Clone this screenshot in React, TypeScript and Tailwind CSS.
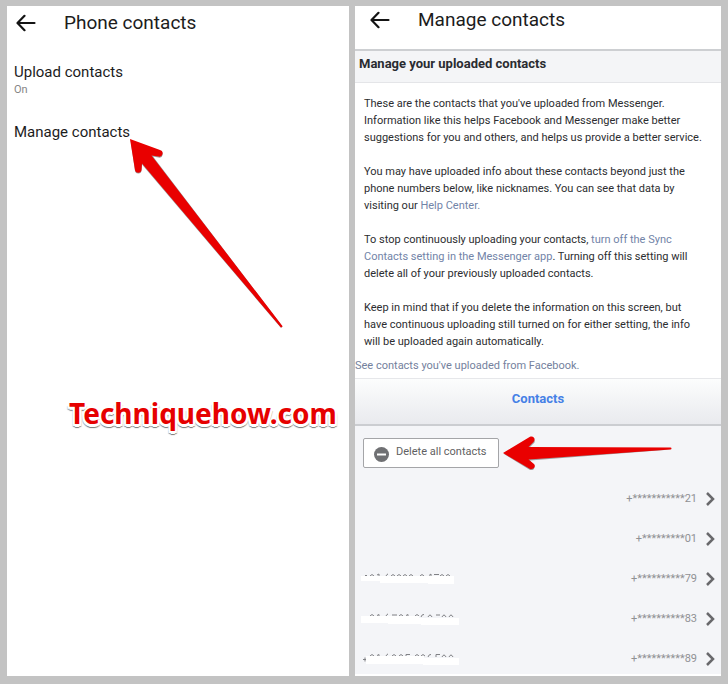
const contacts = [
    { number: "+***********21", masked: "" },
    { number: "+*********01", masked: "" },
    {
        number: "+**********79",
        masked: "M0 3h93v8h-26v-1h-48v-2h-19z",
        marks: "M4 2.500h2M9 3q2-3 4 0M16 2l2-1v2M25 3q1-2 2-2M30 3q2-3 4 0M36 3q2-3 4 0M42 3q2-3 4 0M48 3q2-3 4 0M59 3q2-3 4 0M68 2.500l2-1.500v2M73 1.500h5M79 3q2-3 4 0M85 3q2-3 4 0",
    },
    {
        number: "+**********83",
        masked: "M0 3h58v2h40v7h-38v-1h-33v-1h-27z",
        marks: "M9 3q2-3 4 0M16 2.500l2-1v2M25 3q1-2 2-2M31 2h5M38 3q2-3 4 0M45 2.500l2-1v2M54 3q2-3 4 0M60 4q1-3 3-2.500M67 4q2-4 4 0M75 2h4M81 4q2-4 4 0M88 4q2-4 4 0",
    },
    {
        number: "+**********89",
        masked: "M5 3h58v2h35v7h-36v-1h-57z",
        marks: "M2 6.500h4M4 4.500v4M9 3q2-3 4 0M16 2.500l2-1v2M25 3q1-2 2-2M31 3q2-3 4 0M38 3q2-3 4 0M45 3v-1.500h4M54 3q2-3 4 0M60 3q2-3 4 0M67 4q1-3 3-2.500M75 4v-2.500h4M81 4q2-4 4 0M88 4q2-4 4 0",
    },
];

function BackButton() {
    return (
        <button type="button" aria-label="Back" className="flex h-6 w-6 items-center justify-center">
            <svg width="20" height="18" viewBox="0 0 20 18" fill="none" stroke="#141414" strokeWidth="2.200">
                <path d="M18.500 9H2M8.500 1.800L1.500 9l7 7.200" strokeLinecap="round" strokeLinejoin="round" />
            </svg>
        </button>
    );
}

function PhoneContacts() {
    return (
        <section className="relative bg-white">
            <header className="flex items-center gap-[26px] px-[7px] pt-[5px]">
                <BackButton />
                <h1 className="text-[19px] leading-6 text-[#1c1c1c]">Phone contacts</h1>
            </header>
            <div className="px-[7px] pt-[27px]">
                <h2 className="text-[15px] leading-5">Upload contacts</h2>
                <p className="text-[11px] leading-4 text-[#858585]">On</p>
                <h2 className="mt-6 text-[15px] leading-5">Manage contacts</h2>
            </div>
            <svg
                className="absolute left-[122px] top-[132px]"
                width="156"
                height="192"
                viewBox="0 0 156 192"
                aria-hidden="true"
            >
                <path
                    d="M1.500 2L31 12.800A3.300 3.300 0 0 1 29.500 19.500L24 18.500L153.500 188.500L152 190L13 26.500L12.500 32.500A3.300 3.300 0 0 1 6 33Z"
                    fill="#555"
                    opacity=".6"
                />
                <path
                    d="M1 1L31 12A3.300 3.300 0 0 1 29.500 18.500L22.500 17.500L153 187.500A1 1 0 0 1 151.500 189L13 25.500L12.500 32A3.300 3.300 0 0 1 6 32Z"
                    fill="#e90000"
                />
            </svg>
            <p className="mt-[253px] pl-[62px] font-['Noto_Sans'] text-[28px] font-bold leading-9 text-[#e60000] [text-shadow:-2px_0_#fff,2px_0_#fff,0_-2px_#fff,0_3px_#fff,2px_2px_#fff,-2px_2px_#fff,0_4px_1px_#777,-2px_3px_1px_#999,2px_3px_1px_#999]">
                Techniquehow.com
            </p>
        </section>
    );
}

function ManageContacts() {
    return (
        <section className="flex flex-col bg-white">
            <header className="flex h-[45px] items-start gap-[26px] border-b-2 border-[#cdcfd2] px-[13px] pt-[2px]">
                <BackButton />
                <h1 className="text-[19px] leading-6 text-[#1c1c1c]">Manage contacts</h1>
            </header>
            <h2 className="border-b border-[#e4e5e8] bg-[#f4f5f7] pb-[9px] pl-1 pt-1 text-[13px] font-bold leading-[18px] text-[#2a2c30]">
                Manage your uploaded contacts
            </h2>
            <div className="space-y-[17px] pl-[9px] pr-4 pt-3 text-[11px] leading-[17px] text-[#2c2d30]">
                <p>
                    These are the contacts that you've uploaded from Messenger. Information like this helps Facebook and
                    Messenger make better suggestions for you and others, and helps us provide a better service.
                </p>
                <p>
                    You may have uploaded info about these contacts beyond just the phone numbers below, like nicknames.
                    You can see that data by visiting our <a href="#" className="text-[#7284a8]">Help Center.</a>
                </p>
                <p>
                    To stop continuously uploading your contacts,{" "}
                    <a href="#" className="text-[#7284a8]">turn off the Sync Contacts setting in the Messenger app</a>.
                    Turning off this setting will delete all of your previously uploaded contacts.
                </p>
                <p>
                    Keep in mind that if you delete the information on this screen, but have continuous uploading still
                    turned on for either setting, the info will be uploaded again automatically.
                </p>
            </div>
            <a href="#" className="mt-[7px] pb-1 text-[11px] leading-[17px] text-[#74819d]">
                See contacts you've uploaded from Facebook.
            </a>
            <a
                href="#"
                className="border-b-2 border-t border-b-[#cbcdd1] border-t-[#e6e7ea] bg-linear-to-b from-[#fcfdfd] to-[#e9eaee] pb-[17px] pt-[11px] text-center text-[13px] font-bold leading-[17px] text-[#4580e6]"
            >
                Contacts
            </a>
            <div className="flex-1 border-b-2 border-white bg-[#f4f5f8] pt-[10px]">
                <div className="flex items-center gap-1 pl-2">
                    <button
                        type="button"
                        className="flex h-[30px] w-[136px] items-center gap-[7px] rounded-xs border border-[#a4a5a8] bg-white pl-[10px] text-[11px] leading-4 text-[#5f5f62]"
                    >
                        <svg className="mt-[2px] shrink-0" width="15" height="15" viewBox="0 0 15 15">
                            <circle cx="7.500" cy="7.500" r="7.500" fill="#6f7073" />
                            <path d="M3 7.500h9" stroke="#fff" strokeWidth="2" />
                        </svg>
                        <span className="whitespace-nowrap pb-[3px]">Delete all contacts</span>
                    </button>
                    <svg width="170" height="34" viewBox="0 0 170 34" aria-hidden="true">
                        <path d="M1 18L27 2.500A3 3 0 0 1 30 8L26 12L168 13.500L27 24.500L31 30A3 3 0 0 1 27 34Z" fill="#555" opacity=".55" />
                        <path
                            d="M0 17L27 .800C31 -.500 33 3.500 30.500 6L25.500 11L167.500 11.500A1 1 0 0 1 167.500 13.500L25.500 23.500L31 28C33.500 31 30 34 27 33Z"
                            fill="#e90000"
                        />
                    </svg>
                </div>
                <ul className="mt-[15px] space-y-3">
                    {contacts.map((c) => (
                        <li key={c.number}>
                            <a href="#" className="flex h-7 items-center pl-[6px] pr-[6px] text-[11px] text-[#909194]">
                                {c.masked && (
                                    <svg width="100" height="13" viewBox="0 0 100 13" aria-hidden="true">
                                        <path d={c.marks} fill="none" stroke="#808185" />
                                        <path d={c.masked} fill="#fff" />
                                    </svg>
                                )}
                                <span className="ml-auto">{c.number}</span>
                                <svg className="ml-[9px]" width="9" height="14" viewBox="0 0 9 14" fill="none">
                                    <path d="M1 1l6 6-6 6" stroke="#69696c" strokeWidth="2.500" />
                                </svg>
                            </a>
                        </li>
                    ))}
                </ul>
            </div>
        </section>
    );
}

export default function App() {
    return (
        <main className="grid min-h-screen grid-cols-[342fr_366fr] gap-[6px] bg-[#c3c3c3] px-[7px] pb-2 pt-[6px] font-[Roboto,sans-serif] text-[#1c1c1c]">
            <PhoneContacts />
            <ManageContacts />
        </main>
    );
}
